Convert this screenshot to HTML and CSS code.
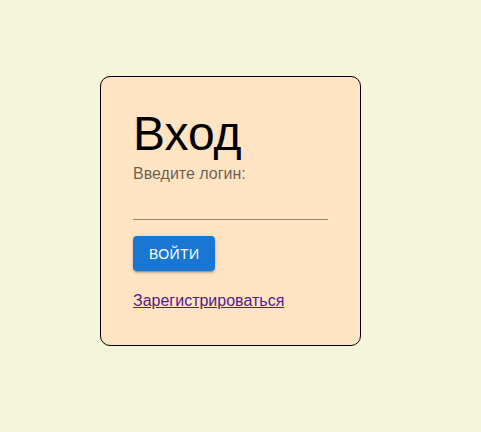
FILE: index.html
```html
<!DOCTYPE html>
<html lang="ru">
<head>
<meta charset="utf-8">
<title>Вход</title>
<link rel="stylesheet" href="styles.css">
</head>
<body>
<main class="page">
  <form class="card">
    <h1 class="title">Вход</h1>
    <label class="label" for="login">Введите логин:</label>
    <input class="field" id="login" type="text">
    <button class="btn" type="button">Войти</button>
    <a class="link" href="#">Зарегистрироваться</a>
  </form>
</main>
</body>
</html>
```

FILE: styles.css
```css
html, body {
  margin: 0;
  padding: 0;
  background: #f5f5dc;
  font-family: "Liberation Sans", Arial, sans-serif;
}

.page {
  padding: 76px 0 0 100px;
}

.card {
  box-sizing: border-box;
  width: 261px;
  height: 270px;
  background: #ffe4c4;
  border: 1px solid #000;
  border-radius: 10px;
  padding: 29px 32px 0 32px;
  display: flex;
  flex-direction: column;
  align-items: flex-start;
}

.title {
  margin: 0;
  font-size: 48px;
  font-weight: 400;
  line-height: 56px;
  color: #000;
}

.label {
  margin-top: 2px;
  font-size: 16px;
  line-height: 20px;
  color: rgba(0, 0, 0, 0.6);
}

.field {
  box-sizing: border-box;
  width: 195px;
  height: 36px;
  margin: 0;
  padding: 0;
  border: none;
  border-bottom: 1px solid rgba(0, 0, 0, 0.42);
  background: transparent;
  font: inherit;
  outline: none;
}

.btn {
  margin-top: 16px;
  height: 35px;
  padding: 0 16px;
  border: none;
  border-radius: 4px;
  background: #1976d2;
  color: #fff;
  font-family: "Liberation Sans", Arial, sans-serif;
  font-size: 14px;
  font-weight: 400;
  letter-spacing: 0.4px;
  text-transform: uppercase;
  box-shadow: 0 3px 1px -2px rgba(0,0,0,0.2), 0 2px 2px 0 rgba(0,0,0,0.14), 0 1px 5px 0 rgba(0,0,0,0.12);
  cursor: pointer;
}

.link {
  margin-top: 20px;
  font-size: 16px;
  line-height: 20px;
  color: #551a8b;
  text-decoration: underline;
}
```
